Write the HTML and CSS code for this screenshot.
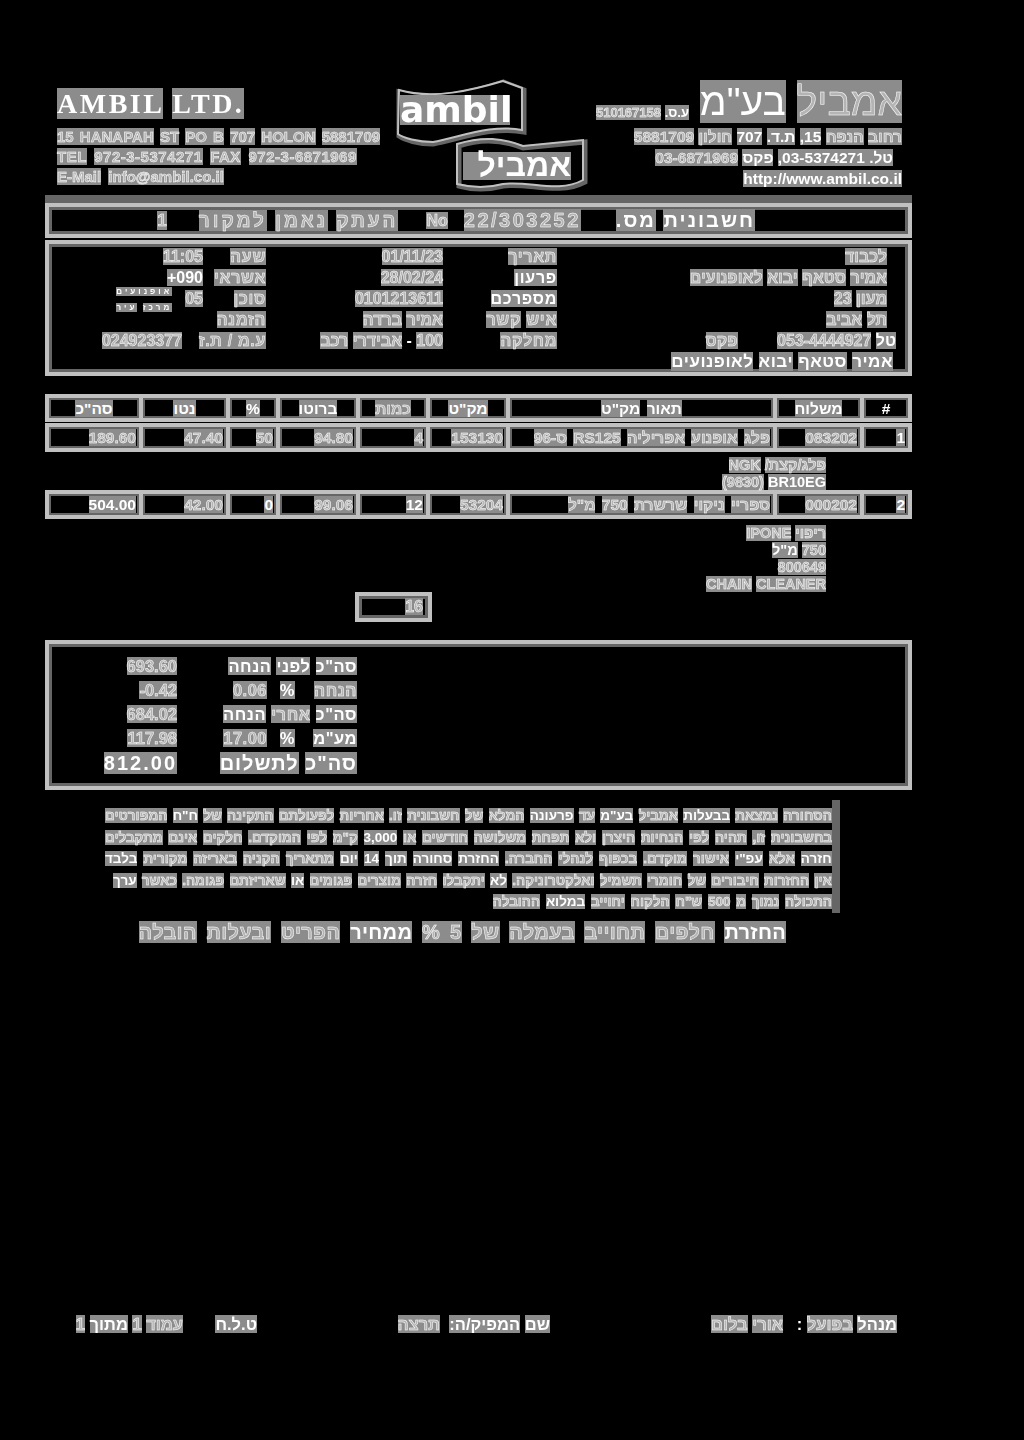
FILE: index.html
```html
<!DOCTYPE html>
<html lang="he" dir="rtl">
<head>
    <meta charset="UTF-8">
    <title>חשבונית מס</title>
    <link rel="stylesheet" href="styles.css">
</head>
<body>
<div class="page">
    <header class="head">
        <div class="head-he">
            <div class="brand-he"><mark class="o">אמביל</mark> <mark>בע"מ</mark></div>
            <div class="vat"><mark>ע.ס.</mark> <mark class="o" dir="ltr">510167158</mark></div>
            <div><mark class="o">רחוב</mark> <mark class="o">הנפח</mark> <mark>15,</mark> <mark>ת.ד.</mark> <mark>707</mark> <mark class="o">חולון</mark> <mark class="o">5881709</mark></div>
            <div class="head-tel"><mark>טל. 03-5374271,</mark> <mark>פקס</mark> <mark class="o">03-6871969</mark></div>
            <div><mark dir="ltr">http://www.ambil.co.il</mark></div>
        </div>
        <svg class="logo" width="200" height="119" viewBox="0 0 200 119">
            <path d="M6 14 C40 24 80 14 110 4 L131 12 L131 54 C100 48 70 60 40 66 C25 66 12 62 6 58 Z" fill="none" stroke="#666" stroke-width="5"/>
            <path d="M6 12 C40 22 80 12 110 3 L129 10 L129 52 C100 46 70 58 40 64 C25 64 10 60 5 56 Z" fill="#000" stroke="#c0c0c0" stroke-width="2"/>
            <rect x="7" y="17" width="110" height="30" fill="#8c8c8c"/>
            <text class="logo-en" x="7" y="44">ambil</text>
            <path d="M66 68 C90 60 110 62 130 70 L192 64 L192 104 C165 118 135 104 110 108 C95 112 80 112 66 108 Z" fill="#000" stroke="#666" stroke-width="5"/>
            <path d="M64 66 C90 58 110 60 130 68 L190 62 L190 102 C165 116 135 102 110 106 C95 110 80 110 64 106 Z" fill="none" stroke="#c0c0c0" stroke-width="2"/>
            <rect x="70" y="74" width="108" height="28" fill="#8c8c8c"/>
            <text class="logo-he" x="178" y="98">אמביל</text>
        </svg>
        <div class="head-en" dir="ltr">
            <div class="brand-en"><mark>AMBIL</mark> <mark>LTD.</mark></div>
            <div class="en-street"><mark class="o">15 HANAPAH</mark> <mark class="o">ST</mark> <mark class="o">PO B</mark> <mark class="o">707</mark> <mark class="o">HOLON</mark> <mark class="o">5881709</mark></div>
            <div class="en-tel"><mark class="o">TEL</mark> <mark class="o">972-3-5374271</mark> <mark class="o">FAX</mark> <mark class="o">972-3-6871969</mark></div>
            <div><mark class="o">E-Mail</mark> <mark class="o">info@ambil.co.il</mark></div>
        </div>
    </header>

    <div class="rule"></div>
    <div class="box title">
        <span class="title-name"><mark>חשבונית</mark> <mark>מס.</mark></span>
        <span class="title-no"><mark class="o" dir="ltr">22/303252</mark></span>
        <span class="title-nr"><mark class="o">No</mark></span>
        <span class="title-copy"><mark class="o">העתק</mark> <mark class="o">נאמן</mark> <mark class="o">למקור</mark></span>
        <span class="title-page"><mark class="o">1</mark></span>
    </div>

    <section class="box info">
        <div class="info-row">
            <div class="addr"><mark class="o">לכבוד</mark></div>
            <div class="label"><mark class="o">תאריך</mark></div>
            <div class="val"><mark class="o" dir="ltr">01/11/23</mark></div>
            <div class="label"><mark class="o">שעה</mark></div>
            <div class="val2"><mark class="o" dir="ltr">11:05</mark></div>
        </div>
        <div class="info-row">
            <div class="addr"><mark class="o">אמיר</mark> <mark class="o">סטאף</mark> <mark class="o">יבוא</mark> <mark class="o">לאופנועים</mark></div>
            <div class="label"><mark>פרעון</mark></div>
            <div class="val"><mark class="o" dir="ltr">28/02/24</mark></div>
            <div class="label"><mark class="o">אשראי</mark></div>
            <div class="val2"><mark dir="ltr">+090</mark></div>
        </div>
        <div class="info-row">
            <div class="addr"><mark class="o">מעון</mark> <mark class="o">23</mark></div>
            <div class="label"><mark>מספרכם</mark></div>
            <div class="val"><mark class="o" dir="ltr">0101213611</mark></div>
            <div class="label"><mark class="o">סוכן</mark></div>
            <div class="val2 agent">
                <span><mark class="o">05</mark></span>
                <div class="agent-note">
                    <span><mark>אופנועים</mark></span>
                    <span><mark>מרכז</mark> <mark>עיר</mark></span>
                </div>
            </div>
        </div>
        <div class="info-row">
            <div class="addr"><mark class="o">תל</mark> <mark class="o">אביב</mark></div>
            <div class="label"><mark class="o">איש</mark> <mark class="o">קשר</mark></div>
            <div class="val"><mark class="o">אמיר</mark> <mark class="o">ברדה</mark></div>
            <div class="label"><mark class="o">הזמנה</mark></div>
            <div class="val2"></div>
        </div>
        <div class="info-row">
            <div class="addr phone"><mark>טל</mark> <mark class="o" dir="ltr">053-4444927</mark> <span class="fax"><mark class="o">פקס</mark></span></div>
            <div class="label"><mark class="o">מחלקה</mark></div>
            <div class="val"><mark class="o">100</mark> - <mark class="o">אבידרי</mark> <mark class="o">רכב</mark></div>
            <div class="label"><mark class="o">ע.מ / ת.ז</mark></div>
            <div class="val2 id"><mark class="o" dir="ltr">024923377</mark></div>
        </div>
        <div class="info-row">
            <div class="addr last"><mark>אמיר</mark> <mark>סטאף</mark> <mark>יבוא</mark> <mark>לאופנועים</mark></div>
        </div>
    </section>

    <section class="lines">
        <div class="row row-head">
            <div class="cell">#</div>
            <div class="cell"><mark>משלוח</mark></div>
            <div class="cell"><mark>תאור</mark> <mark>מק"ט</mark></div>
            <div class="cell"><mark>מק"ט</mark></div>
            <div class="cell"><mark class="o">כמות</mark></div>
            <div class="cell"><mark>ברוטו</mark></div>
            <div class="cell"><mark>%</mark></div>
            <div class="cell"><mark>נטו</mark></div>
            <div class="cell"><mark>סה"כ</mark></div>
        </div>
        <div class="row">
            <div class="cell"><mark>1</mark></div>
            <div class="cell"><mark class="o" dir="ltr">083202</mark></div>
            <div class="cell"><mark class="o">פלג</mark> <mark class="o">אופנוע</mark> <mark class="o">אפריליה</mark> <mark class="o" dir="ltr">RS125</mark> <mark class="o" dir="ltr">96-ס</mark></div>
            <div class="cell"><mark class="o" dir="ltr">153130</mark></div>
            <div class="cell"><mark class="o">4</mark></div>
            <div class="cell"><mark class="o" dir="ltr">94.80</mark></div>
            <div class="cell"><mark class="o">50</mark></div>
            <div class="cell"><mark class="o" dir="ltr">47.40</mark></div>
            <div class="cell"><mark class="o" dir="ltr">189.60</mark></div>
        </div>
        <div class="sub sub-one">
            <div><mark class="o">פלג/קצת/</mark> <mark class="o">NGK</mark></div>
            <div dir="ltr"><mark class="o">(9830)</mark> <mark>BR10EG</mark></div>
        </div>
        <div class="row">
            <div class="cell"><mark>2</mark></div>
            <div class="cell"><mark class="o" dir="ltr">000202</mark></div>
            <div class="cell"><mark class="o">ספריי</mark> <mark class="o">ניקוי</mark> <mark class="o">שרשרת</mark> <mark class="o">750</mark> <mark class="o">מ"ל</mark></div>
            <div class="cell"><mark class="o" dir="ltr">53204</mark></div>
            <div class="cell"><mark>12</mark></div>
            <div class="cell"><mark class="o" dir="ltr">99.06</mark></div>
            <div class="cell"><mark>0</mark></div>
            <div class="cell"><mark class="o" dir="ltr">42.00</mark></div>
            <div class="cell"><mark dir="ltr">504.00</mark></div>
        </div>
        <div class="sub sub-two">
            <div><mark class="o">ריפוי</mark> <mark class="o">IPONE</mark></div>
            <div><mark class="o">750</mark> <mark>מ"ל</mark></div>
            <div><mark class="o" dir="ltr">800649</mark></div>
            <div dir="ltr"><mark class="o">CHAIN</mark> <mark class="o">CLEANER</mark></div>
        </div>
        <div class="qty-total"><mark class="o">16</mark></div>
    </section>

    <section class="box totals">
        <div class="total-row">
            <div class="total-label"><mark>סה"כ</mark> <mark>לפני</mark> <mark>הנחה</mark></div>
            <div class="total-val"><mark class="o" dir="ltr">693.60</mark></div>
        </div>
        <div class="total-row">
            <div class="total-label split"><span class="split-name"><mark class="o">הנחה</mark></span><span class="split-pct"><mark>%</mark></span><span><mark class="o" dir="ltr">0.06</mark></span></div>
            <div class="total-val"><mark class="o" dir="ltr">-0.42</mark></div>
        </div>
        <div class="total-row">
            <div class="total-label"><mark>סה"כ</mark> <mark class="o">אחרי</mark> <mark>הנחה</mark></div>
            <div class="total-val"><mark class="o" dir="ltr">684.02</mark></div>
        </div>
        <div class="total-row">
            <div class="total-label split"><span class="split-name"><mark>מע"מ</mark></span><span class="split-pct"><mark>%</mark></span><span><mark class="o" dir="ltr">17.00</mark></span></div>
            <div class="total-val"><mark class="o" dir="ltr">117.98</mark></div>
        </div>
        <div class="total-row grand">
            <div class="total-label"><mark>סה"כ</mark> <mark>לתשלום</mark></div>
            <div class="total-val"><mark dir="ltr">812.00</mark></div>
        </div>
    </section>

    <section class="terms">
        <div class="terms-body">
            <p class="full"><mark class="o">הסחורה</mark> <mark class="o">נמצאת</mark> <mark>בבעלות</mark> <mark class="o">אמביל</mark> <mark>בע"מ</mark> <mark class="o">עד</mark> <mark>פרעונה</mark> <mark class="o">המלא</mark> <mark class="o">של</mark> <mark class="o">חשבונית</mark> <mark class="o">זו.</mark> <mark class="o">אחריות</mark> <mark class="o">לפעולתם</mark> <mark class="o">התקינה</mark> <mark class="o">של</mark> <mark>ח"ח</mark> <mark class="o">המפורטים</mark></p>
            <p class="full"><mark class="o">בחשבונית</mark> <mark class="o">זו,</mark> <mark class="o">תהיה</mark> <mark class="o">לפי</mark> <mark class="o">הנחיות</mark> <mark class="o">היצרן</mark> <mark class="o">ולא</mark> <mark class="o">תפחת</mark> <mark class="o">משלושה</mark> <mark class="o">חודשים</mark> <mark class="o">או</mark> <mark>3,000</mark> <mark class="o">ק"מ</mark> <mark class="o">לפי</mark> <mark class="o">המוקדם.</mark> <mark class="o">חלקים</mark> <mark class="o">אינם</mark> <mark class="o">מתקבלים</mark></p>
            <p class="full"><mark>חזרה</mark> <mark class="o">אלא</mark> <mark>עפ"י</mark> <mark class="o">אישור</mark> <mark class="o">מוקדם.</mark> <mark class="o">בכפוף</mark> <mark class="o">לנהלי</mark> <mark class="o">החברה.</mark> <mark>החזרת</mark> <mark>סחורה</mark> <mark>תוך</mark> <mark>14</mark> <mark>יום</mark> <mark class="o">מתאריך</mark> <mark class="o">הקניה</mark> <mark class="o">באריזה</mark> <mark class="o">מקורית</mark> <mark>בלבד</mark></p>
            <p class="full four"><mark class="o">אין</mark> <mark class="o">החזרות</mark> <mark class="o">חיבורים</mark> <mark class="o">של</mark> <mark class="o">חומרי</mark> <mark class="o">תשמיל</mark> <mark class="o">ואלקטרוניקה.</mark> <mark>לא</mark> <mark class="o">יתקבלו</mark> <mark class="o">חזרה</mark> <mark class="o">מוצרים</mark> <mark class="o">פגומים</mark> <mark>או</mark> <mark class="o">שאריזתם</mark> <mark class="o">פגומה.</mark> <mark class="o">כאשר</mark> <mark>ערך</mark></p>
            <p class="short"><mark class="o">התכולה</mark> <mark class="o">נמוך</mark> <mark class="o">מ</mark> <mark class="o">500</mark> <mark class="o">ש"ח</mark> <mark class="o">הלקוח</mark> <mark class="o">יחוייב</mark> <mark>במלוא</mark> <mark class="o">ההובלה</mark></p>
        </div>
        <p class="big"><mark>החזרת</mark> <mark class="o">חלפים</mark> <mark class="o">תחוייב</mark> <mark class="o">בעמלה</mark> <mark class="o">של</mark> <mark class="o">5 %</mark> <mark>ממחיר</mark> <mark class="o">הפריט</mark> <mark class="o">ובעלות</mark> <mark class="o">הובלה</mark></p>
    </section>

    <footer class="foot">
        <div><mark>מנהל</mark> <mark class="o">בפועל</mark> : &nbsp;&nbsp;<mark class="o">אורי</mark> <mark class="o">בלום</mark></div>
        <div><mark>שם</mark> <mark>המפיק/ה:</mark> &nbsp;<mark class="o">תרצה</mark></div>
        <div><mark>ט.ל.ח</mark></div>
        <div><mark class="o">עמוד</mark> <mark class="o">1</mark> <mark>מתוך</mark> <mark class="o">1</mark></div>
    </footer>
</div>
</body>
</html>
```
FILE: styles.css
```css
body {
    margin: 0;
    background-color: #000;
    color: #fff;
    font-family: "Liberation Sans", "DejaVu Sans", sans-serif;
    font-size: 14px;
    font-weight: bold;
}

mark {
    background-color: #8c8c8c;
    color: #fff;
}

/* слова, которые на образце только контуром */
mark.o {
    color: #b4b4b4;
    -webkit-text-stroke: 0.5px #fff;
}

.page {
    box-sizing: border-box;
    width: 1024px;
    height: 1440px;
    padding: 78px 112px 0 45px;
    will-change: opacity;
}

/* шапка */
.head {
    display: flex;
    height: 117px;
    align-items: flex-start;
}

.head-he {
    width: 317px;
    padding: 6px 10px 0 0;
    box-sizing: border-box;
    font-size: 15.5px;
    line-height: 21px;
    white-space: nowrap;
}

.brand-he {
    font-size: 39px;
    line-height: 36px;
    font-weight: normal;
}

.vat {
    font-size: 13px;
    line-height: 14px;
    margin: -14px 213px 6px 0;
}

.head-tel {
    margin-right: 9px;
}

.logo {
    flex: none;
    margin-right: 2px;
}

.logo-en {
    font-family: "DejaVu Sans", sans-serif;
    font-size: 36px;
    font-weight: bold;
    fill: #fff;
    direction: ltr;
}

.logo-he {
    font-family: "Liberation Sans", sans-serif;
    font-size: 32px;
    font-weight: bold;
    fill: #fff;
    direction: rtl;
}

.head-en {
    flex: 1;
    padding: 12px 0 0 12px;
    font-size: 15px;
    line-height: 20px;
    word-spacing: 3px;
    white-space: nowrap;
    direction: ltr;
    text-align: left;
}

.brand-en {
    font-family: "Liberation Serif", serif;
    font-size: 28px;
    line-height: 28px;
    letter-spacing: 2.5px;
    word-spacing: 0;
    margin-bottom: 9px;
}

.en-street {
    word-spacing: 2px;
}

.en-tel {
    letter-spacing: 0.5px;
}

.rule {
    height: 8px;
    background-color: #666;
}

.box {
    box-sizing: border-box;
    border: 4px solid #c0c0c0;
    box-shadow: inset 0 0 0 3px #666;
}

/* заголовок */
.title {
    display: flex;
    align-items: center;
    height: 35px;
    padding-right: 153px;
    font-size: 20px;
    white-space: nowrap;
}

.title-name {
    letter-spacing: 2px;
}

.title-no {
    margin-right: 35px;
    letter-spacing: 2.5px;
}

.title-nr {
    margin-right: 16px;
    font-size: 16px;
}

.title-copy {
    margin-right: 28px;
    font-size: 19px;
    letter-spacing: 3px;
}

.title-page {
    margin-right: 32px;
    font-size: 17px;
}

/* реквизиты */
.info {
    height: 136px;
    margin-top: 2px;
    padding: 2px 21px 0 0;
}

.info-row {
    display: grid;
    grid-template-columns: 330px 114px 177px 63px 1fr;
    height: 21px;
    line-height: 21px;
    font-size: 16px;
    white-space: nowrap;
}

.label {
    letter-spacing: 0.7px;
}

.agent {
    display: flex;
    gap: 13px;
}

.agent-note {
    margin-top: -4px;
}

.agent-note span {
    display: block;
    height: 16px;
    font-size: 8px;
    line-height: 16px;
    letter-spacing: 3px;
}

.id {
    padding-right: 21px;
}

.fax {
    margin-right: 35px;
}

.last {
    margin-right: -6px;
    font-size: 17px;
    letter-spacing: 0.5px;
}

.phone {
    margin-right: -9px;
}

/* таблица */
.lines {
    margin-top: 18px;
}

.row {
    display: grid;
    grid-template-columns: 48px 87px 267px 80px 70px 80px 50px 87px 94px;
    border: 2px solid #c0c0c0;
    box-sizing: border-box;
    height: 29px;
}

.cell {
    border: 2px solid #c0c0c0;
    box-shadow: inset 0 0 0 2px #666;
    padding: 0 3px;
    line-height: 21px;
    font-size: 15.5px;
    word-spacing: 2px;
    white-space: nowrap;
    overflow: hidden;
}

.row-head {
    height: 28px;
    margin-bottom: 1px;
}

.row-head .cell {
    text-align: center;
}

.sub {
    padding-right: 86px;
    line-height: 17px;
    font-size: 14.5px;
    white-space: nowrap;
}

.sub-one {
    padding-top: 5px;
    margin-bottom: -1px;
}

.sub-two {
    padding-top: 6px;
    margin-bottom: -1px;
}

.sub > div[dir="ltr"] {
    text-align: right;
}

.qty-total {
    box-sizing: border-box;
    width: 77px;
    height: 30px;
    margin-right: 480px;
    border: 4px solid #c0c0c0;
    box-shadow: inset 0 0 0 3px #666;
    padding: 0 5px;
    line-height: 22px;
    font-size: 16px;
}

/* итоги */
.totals {
    height: 150px;
    margin-top: 18px;
    padding-top: 10px;
}

.total-row {
    display: flex;
    height: 24px;
    line-height: 24px;
    width: 308px;
    margin-right: auto;
    white-space: nowrap;
}

.total-label {
    width: 176px;
    font-size: 16.5px;
    letter-spacing: 0.5px;
    flex: none;
}

.split {
    display: flex;
}

.split-name {
    width: 62px;
}

.split-pct {
    width: 28px;
}

.total-val {
    flex: 1;
    padding-right: 4px;
    font-size: 16.5px;
}

.grand {
    margin-top: 1px;
}

.grand .total-label {
    font-size: 20px;
    letter-spacing: 1px;
}

.grand .total-val {
    font-size: 20px;
    letter-spacing: 2px;
}

/* условия */
.terms {
    margin-top: 10px;
    font-size: 13.5px;
}

.terms-body {
    margin-right: 72px;
    padding: 5px 0 0 0;
    border-right: 8px solid #666;
}

.terms p {
    margin: 0;
    height: 21.5px;
    line-height: 21.5px;
}

.terms .full {
    width: 727px;
    text-align: justify;
    text-align-last: justify;
}

.terms .four {
    width: 719px;
}

.terms .short {
    word-spacing: 2px;
    white-space: nowrap;
}

.terms .big {
    margin: 4px 126px 0 0;
    height: 30px;
    line-height: 30px;
    font-size: 20px;
    letter-spacing: 0.3px;
    word-spacing: 4px;
    white-space: nowrap;
}

/* подвал */
.foot {
    display: grid;
    grid-template-columns: 347px 293px 74px 1fr;
    margin-top: 367px;
    padding-right: 15px;
    line-height: 20px;
    font-size: 16.5px;
    white-space: nowrap;
}
```
